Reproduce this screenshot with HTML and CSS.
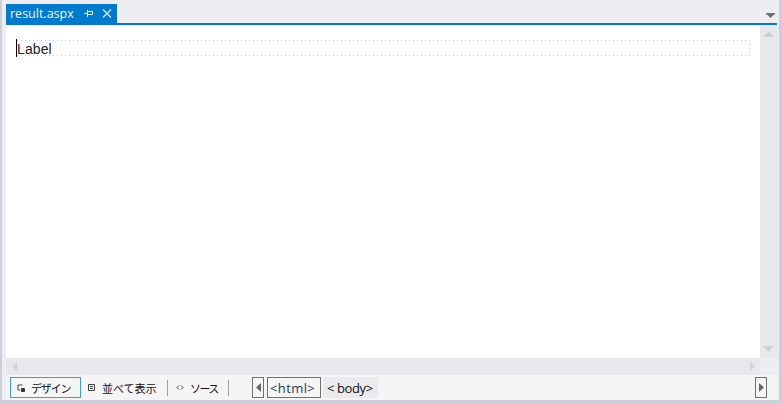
FILE: index.html
```html
<!DOCTYPE html>
<html lang="ja">
<head>
<meta charset="utf-8">
<title>result.aspx</title>
<link rel="stylesheet" href="styles.css">
</head>
<body>
<div class="window">
  <div class="tabbar">
    <div class="tab">
      <span class="tab-name">result.aspx</span>
      <svg class="pin" width="9" height="7" viewBox="0 0 9 7"><path d="M0 3.500h3M3.500 0v7M4 1.500h4.500v3H4" fill="none" stroke="#fff" stroke-width="1"/></svg>
      <svg class="close" width="10" height="9" viewBox="0 0 10 9"><path d="M1 .500l8 8M9 .500l-8 8" fill="none" stroke="#d5e6f5" stroke-width="1.300"/></svg>
    </div>
    <svg class="tab-menu" width="9" height="5" viewBox="0 0 9 5"><path d="M0 0h9v1.500H8L4.500 5 1 1.500H0z" fill="#707070"/></svg>
  </div>
  <div class="main">
    <div class="editor">
      <div class="canvas">
        <div class="label-box"><span class="label">Label</span></div>
      </div>
      <div class="vscroll">
        <svg width="11" height="6" viewBox="0 0 11 6"><path d="M5.500 0L11 6H0z" fill="#cfd0d6"/></svg>
        <svg width="11" height="6" viewBox="0 0 11 6"><path d="M0 0h11L5.500 6z" fill="#cfd0d6"/></svg>
      </div>
    </div>
    <div class="hscroll">
      <svg width="5" height="9" viewBox="0 0 5 9"><path d="M5 0v9L0 4.500z" fill="#d3d4da"/></svg>
      <svg width="5" height="9" viewBox="0 0 5 9"><path d="M0 0v9l5-4.500z" fill="#d3d4da"/></svg>
    </div>
    <div class="statusbar">
      <div class="view view-design">
        <svg width="8" height="8" viewBox="0 0 8 8"><path d="M5.500 1H1v5h2" fill="none" stroke="#444" stroke-width="1"/><rect x="4" y="4" width="4" height="4" rx="1" fill="#333"/></svg>
        <span class="text-design">デザイン</span>
      </div>
      <div class="view view-split">
        <svg width="7" height="7" viewBox="0 0 7 7"><path d="M.5.500h6v6h-6zM2 2.500h3M2 4.500h3" fill="none" stroke="#444" stroke-width="1"/></svg>
        <span>並べて表示</span>
      </div>
      <div class="sep"></div>
      <div class="view view-source">
        <svg width="8" height="5" viewBox="0 0 8 5"><path d="M3 .500L1 2.500l2 2M5 .500l2 2-2 2" fill="none" stroke="#444" stroke-width="1"/></svg>
        <span class="text-source">ソース</span>
      </div>
      <div class="sep"></div>
      <div class="nav-btn"><svg width="5" height="9" viewBox="0 0 5 9"><path d="M5 0v9L0 4.500z" fill="#666"/></svg></div>
      <div class="crumb crumb-active">&lt;html&gt;</div>
      <div class="crumb crumb-plain">&lt; body&gt;</div>
      <div class="nav-btn nav-end"><svg width="5" height="9" viewBox="0 0 5 9"><path d="M0 0v9l5-4.500z" fill="#666"/></svg></div>
    </div>
  </div>
</div>
</body>
</html>
```
FILE: styles.css
```css
* { box-sizing: border-box; }
html, body { margin: 0; height: 100%; }
body { width: 782px; height: 404px; overflow: hidden; background: #eeeef2; font-family: "Noto Sans CJK JP", "Liberation Sans", sans-serif; }
.window { height: 404px; display: flex; flex-direction: column; padding: 0 2px 0 4px; border-left: 2px solid #ccced9; border-right: 3px solid #ccced9; border-bottom: 4px solid #ccced9; }
.tabbar { height: 25px; flex: none; display: flex; align-items: flex-start; justify-content: space-between; border-bottom: 2px solid #007acc; padding-top: 4px; }
.tab { width: 111px; height: 19px; background: #007acc; color: #f0f6fb; display: flex; align-items: center; padding-left: 4px; font: 12.5px "Open Sans", "Liberation Sans", sans-serif; }
.tab-name { width: 74px; white-space: nowrap; }
.pin { margin-right: 9px; }
.tab-menu { margin: 9px 2px 0 0; }
.main { flex: 1; display: flex; flex-direction: column; min-height: 0; }
.editor { flex: 1; display: flex; min-height: 0; }
.canvas { flex: 1; background: #fff; padding: 15px 10px 0 10px; }
.label-box {
  height: 16px;
  display: flex;
  align-items: flex-start;
  background-image:
    linear-gradient(90deg, #c4c4c4 1px, transparent 1px),
    linear-gradient(90deg, #c4c4c4 1px, transparent 1px),
    linear-gradient(180deg, #c4c4c4 1px, transparent 1px);
  background-size: 4px 1px, 4px 1px, 1px 4px;
  background-repeat: repeat-x, repeat-x, repeat-y;
  background-position: 1px 0, 1px 100%, 100% 0;
}
.label { font: 14px/20px "Liberation Sans", sans-serif; color: #222; border-left: 1px solid #000; height: 18px; margin-top: -1px; letter-spacing: .1px; }
.vscroll { width: 17px; background: #e8e8ec; display: flex; flex-direction: column; justify-content: space-between; align-items: center; padding: 6px 0 6px; }
.hscroll { height: 17px; flex: none; margin-right: 17px; background: #e8e8ec; display: flex; justify-content: space-between; align-items: center; padding: 0 5px 0 6px; }
.statusbar { height: 25px; flex: none; background: #f5f5f5; display: flex; align-items: center; padding-left: 4px; font-size: 11px; color: #111; }
.view { height: 21px; display: flex; align-items: center; white-space: nowrap; }
.view-design { width: 71px; border: 1px solid #3399ff; padding-left: 6px; gap: 6px; }
.view-split { width: 86px; padding-left: 7px; gap: 7px; }
.view-source { width: 60px; padding-left: 8px; gap: 6px; }
.text-design { letter-spacing: -1.2px; }
.text-source { letter-spacing: -1.6px; }
.sep { width: 1px; height: 16px; background: #a0a0a0; }
.nav-btn { width: 12px; height: 21px; border: 1px solid #707070; display: flex; align-items: center; justify-content: center; margin-left: 23px; }
.crumb { height: 21px; display: flex; align-items: center; font: 13px "Open Sans", "Liberation Sans", sans-serif; white-space: nowrap; }
.crumb-active { width: 54px; border: 1px solid #707070; margin-left: 3px; padding-left: 2px; color: #1e3a5a; letter-spacing: .4px; }
.crumb-plain { width: 55px; background: #ebebef; margin-left: 2px; padding-left: 4px; white-space: pre; letter-spacing: -.4px; }
.nav-end { margin-left: auto; margin-right: 10px; }
```
